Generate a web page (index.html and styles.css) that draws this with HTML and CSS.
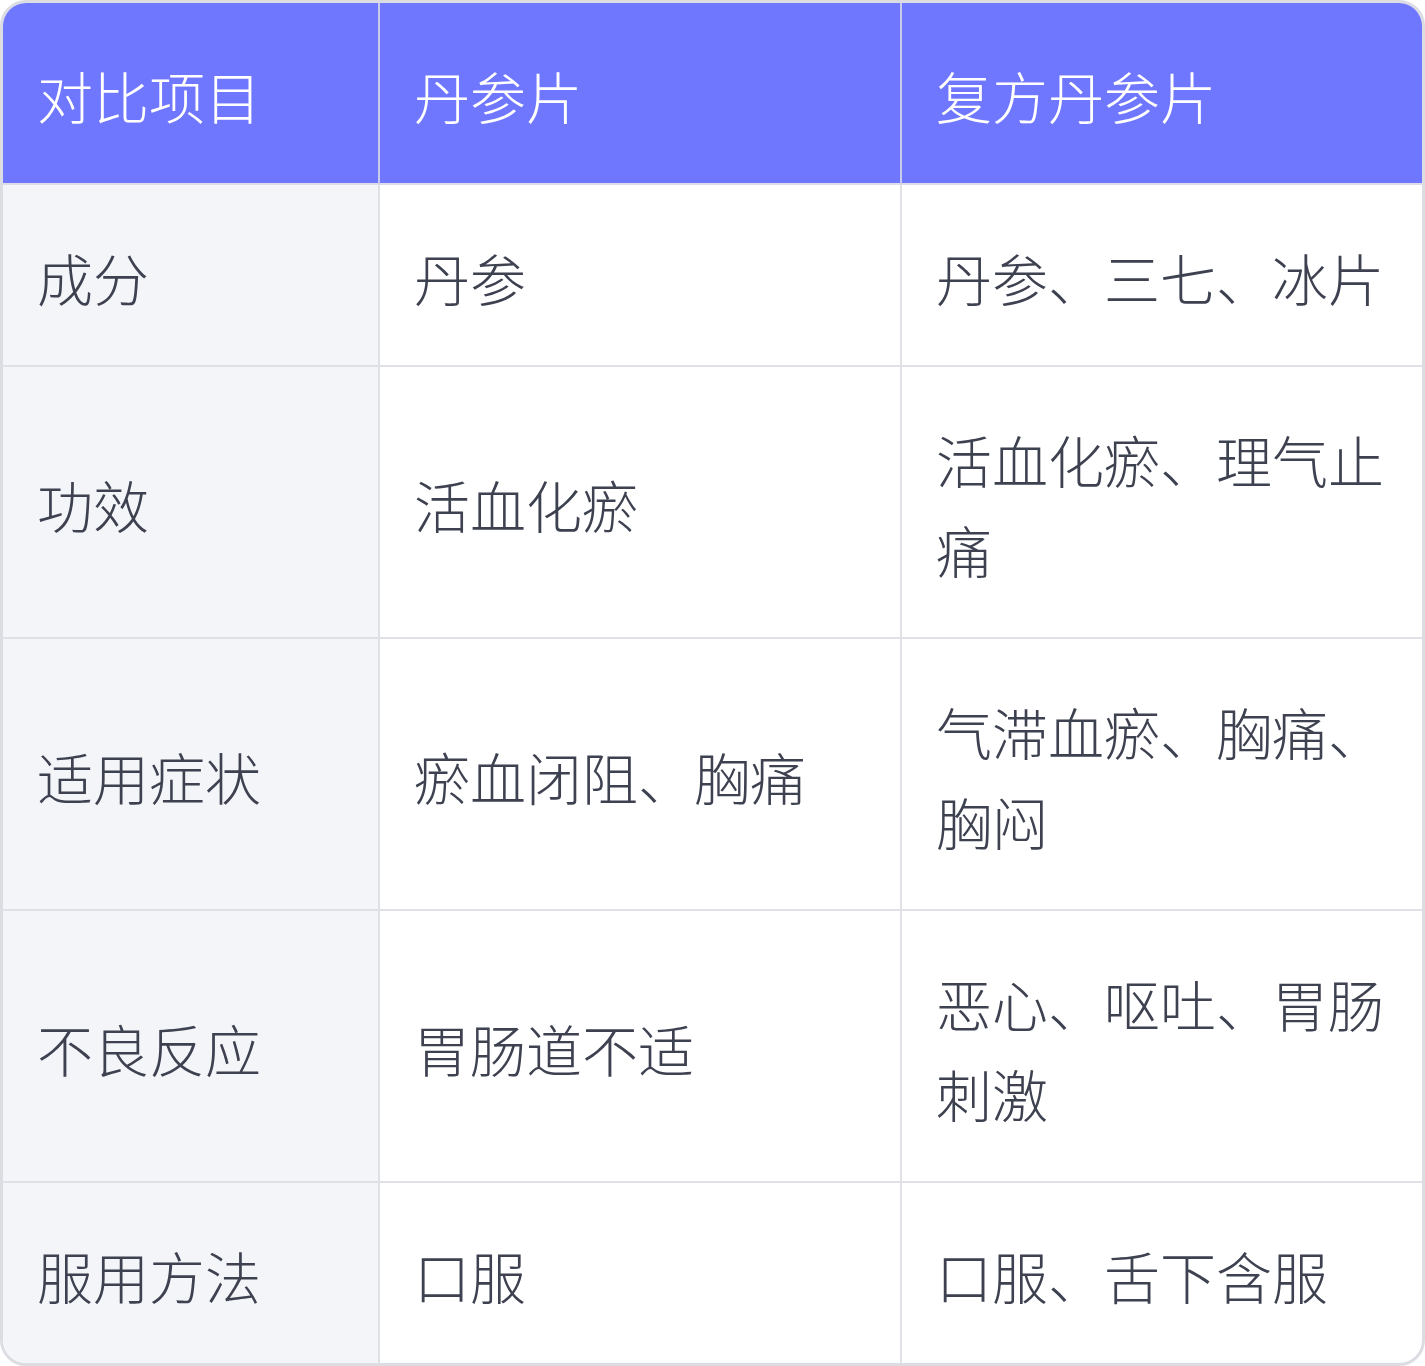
FILE: index.html
```html
<!DOCTYPE html>
<html lang="zh-CN">
<head>
<meta charset="utf-8">
<title>丹参片对比</title>
<link rel="stylesheet" href="styles.css">
</head>
<body>
<div class="card">
  <table class="cmp">
    <colgroup>
      <col class="c1"><col class="c2"><col class="c3">
    </colgroup>
    <thead>
      <tr><th>对比项目</th><th>丹参片</th><th>复方丹参片</th></tr>
    </thead>
    <tbody>
      <tr><td>成分</td><td>丹参</td><td>丹参、三七、冰片</td></tr>
      <tr><td>功效</td><td>活血化瘀</td><td>活血化瘀、理气止痛</td></tr>
      <tr><td>适用症状</td><td>瘀血闭阻、胸痛</td><td>气滞血瘀、胸痛、胸闷</td></tr>
      <tr><td>不良反应</td><td>胃肠道不适</td><td>恶心、呕吐、胃肠刺激</td></tr>
      <tr><td>服用方法</td><td>口服</td><td>口服、舌下含服</td></tr>
    </tbody>
  </table>
</div>
</body>
</html>
```

FILE: styles.css
```css
html, body {
  margin: 0;
  padding: 0;
  background: #ffffff;
}
.card {
  width: 1425px;
  box-sizing: border-box;
  border: 3px solid #dcdde3;
  border-radius: 26px;
  overflow: hidden;
  background: #ffffff;
}
.cmp {
  width: 100%;
  border-collapse: separate;
  border-spacing: 0;
  table-layout: fixed;
  font-family: "Noto Sans CJK SC", "Noto Sans", sans-serif;
  font-weight: 300;
  font-size: 56px;
  line-height: 90px;
  color: #3d4150;
}
.c1 { width: 377px; }
.c2 { width: 522px; }
.c3 { width: 520px; }
.cmp th, .cmp td {
  text-align: left;
  vertical-align: middle;
  padding: 47px 34px 43px;
  border-right: 2px solid #e0e1e6;
  border-bottom: 2px solid #e0e1e6;
  word-break: break-all;
}
.cmp th:last-child, .cmp td:last-child {
  border-right: none;
}
.cmp tbody tr:last-child td {
  border-bottom: none;
}
.cmp th {
  background: #7077ff;
  color: #ffffff;
  font-weight: 300;
  border-right-color: #c9cbec;
  border-bottom-color: #dcdde6;
}
.cmp td:first-child {
  background: #f4f5f9;
}
```
